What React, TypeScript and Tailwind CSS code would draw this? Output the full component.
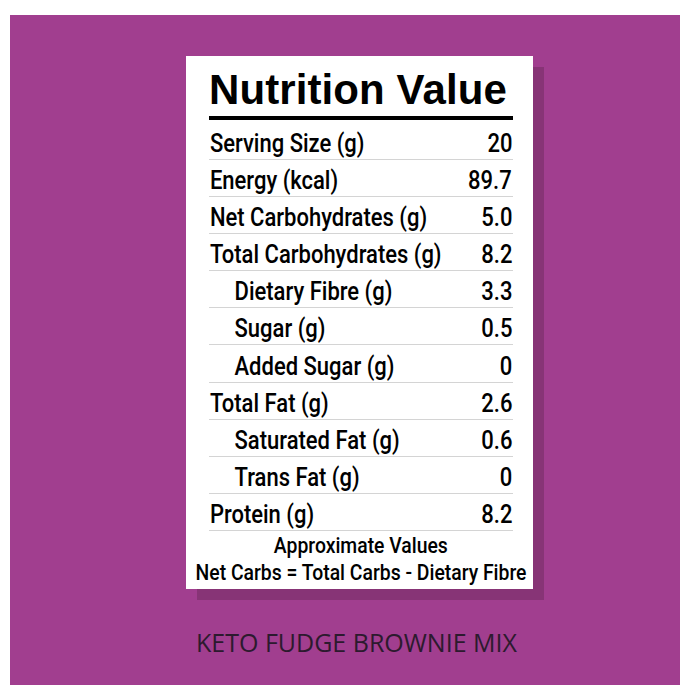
const rows: { label: string; value: string; indent?: boolean }[] = [
  { label: "Serving Size (g)", value: "20" },
  { label: "Energy (kcal)", value: "89.7" },
  { label: "Net Carbohydrates (g)", value: "5.0" },
  { label: "Total Carbohydrates (g)", value: "8.2" },
  { label: "Dietary Fibre (g)", value: "3.3", indent: true },
  { label: "Sugar (g)", value: "0.5", indent: true },
  { label: "Added Sugar (g)", value: "0", indent: true },
  { label: "Total Fat (g)", value: "2.6" },
  { label: "Saturated Fat (g)", value: "0.6", indent: true },
  { label: "Trans Fat (g)", value: "0", indent: true },
  { label: "Protein (g)", value: "8.2" },
];

export default function App() {
  return (
    <div className="w-[690px] h-[700px] bg-white pt-[15px] pl-[10px]">
      <div className="w-[670px] h-[670px] bg-[#a13e8f] pt-[41px] pl-[176px]">
        <div className="w-[347px] h-[533px] bg-white shadow-[11px_11px_0_#873476] pt-[13px] pl-[23px] pr-[20px] font-['Roboto',sans-serif] font-medium text-black">
          <h1 className="font-['Liberation_Sans',Arial,sans-serif] font-bold text-[42px] leading-[42px] h-[42px] tracking-[0.1px]">
            Nutrition Value
          </h1>
          <div className="mt-[5px] h-[4px] bg-black" />
          {rows.map((row, i) => (
            <div
              key={i}
              className={
                "flex items-end justify-between border-b border-[#d4d4d4] pb-[3px] text-[25px] leading-[25px] " +
                (i === 0 ? "h-[39.5px]" : "h-[37.2px]")
              }
            >
              <span
                className={
                  "inline-block whitespace-nowrap origin-left scale-x-[0.88] " +
                  (row.indent ? "pl-[29px]" : "pl-[1px]")
                }
              >
                {row.label}
              </span>
              <span className="inline-block origin-right scale-x-[0.88] pr-[1px]">{row.value}</span>
            </div>
          ))}
          <div className="flex flex-col items-center text-[22px] leading-[26.6px] pt-[2px]">
            <span className="inline-block whitespace-nowrap scale-x-[0.88]">Approximate Values</span>
            <span className="inline-block whitespace-nowrap scale-x-[0.88]">
              Net Carbs = Total Carbs - Dietary Fibre
            </span>
          </div>
        </div>
        <div className="w-[347px] mt-[38px] pr-[6px] text-center text-[25px] leading-[30px] text-[#2c1a2e] font-['Open_Sans',sans-serif]">
          KETO FUDGE BROWNIE MIX
        </div>
      </div>
    </div>
  );
}
